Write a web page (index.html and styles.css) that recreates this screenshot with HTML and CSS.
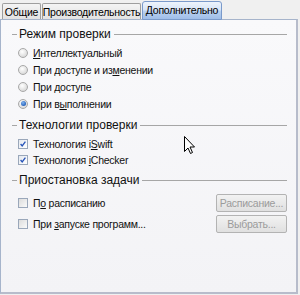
FILE: index.html
```html
<!DOCTYPE html>
<html>
<head>
<meta charset="utf-8">
<link rel="stylesheet" href="styles.css">
</head>
<body>
<div class="window">
  <div class="tabs">
    <div class="tab t1">Общие</div>
    <div class="tab t2">Производительность</div>
    <div class="tab active">Дополнительно</div>
  </div>
  <div class="panel">
    <div class="group">
      <div class="legend"><span class="lead"></span><span class="ltext">Режим проверки</span><span class="rule"></span></div>
      <div class="opts radios">
        <div class="row"><span class="radio"></span><span><u>И</u>нтеллектуальный</span></div>
        <div class="row"><span class="radio"></span><span>При доступе и из<u>м</u>енении</span></div>
        <div class="row"><span class="radio"></span><span>При <u>д</u>оступе</span></div>
        <div class="row"><span class="radio on"></span><span>При в<u>ы</u>полнении</span></div>
      </div>
    </div>
    <div class="group">
      <div class="legend"><span class="lead"></span><span class="ltext">Технологии проверки</span><span class="rule"></span></div>
      <div class="opts checks">
        <div class="row"><span class="check on"><svg viewBox="0 0 10 10" width="10" height="10"><path d="M2 5 L4 7.5 L8 2" fill="none" stroke="#2452b8" stroke-width="1.6"/></svg></span><span>Технология i<u>S</u>wift</span></div>
        <div class="row"><span class="check on"><svg viewBox="0 0 10 10" width="10" height="10"><path d="M2 5 L4 7.5 L8 2" fill="none" stroke="#2452b8" stroke-width="1.6"/></svg></span><span>Технология <u>i</u>Checker</span></div>
      </div>
    </div>
    <div class="group">
      <div class="legend"><span class="lead"></span><span class="ltext">Приостановка задачи</span><span class="rule"></span></div>
      <div class="opts tasks">
        <div class="row"><span class="check"></span><span class="grow">П<u>о</u> расписанию</span><span class="btn">Расписание...</span></div>
        <div class="row"><span class="check"></span><span class="grow">При <u>з</u>апуске программ...</span><span class="btn">Выбрать...</span></div>
      </div>
    </div>
  </div>
  <svg class="cursor" width="12" height="19" viewBox="0 0 12 19"><path d="M0.5 0.5 L0.5 15.5 L4 12 L6.5 17.5 L8.5 16.5 L6 11 L10.5 11 Z" fill="#fff" stroke="#000" stroke-width="1"/></svg>
</div>
</body>
</html>
```

FILE: styles.css
```css
html, body {
  margin: 0;
  padding: 0;
}
body {
  width: 300px;
  height: 295px;
  background: #f0f0f0;
  font-family: "Liberation Sans", "DejaVu Sans", sans-serif;
  font-size: 10.5px;
  letter-spacing: -0.25px;
  color: #000;
  overflow: hidden;
}
.window {
  position: relative;
  width: 300px;
  height: 295px;
}
.tabs {
  display: flex;
  align-items: flex-end;
  height: 19px;
  padding-left: 2px;
  position: relative;
  z-index: 2;
}
.tab {
  box-sizing: border-box;
  height: 16px;
  border: 1px solid #9e9e9e;
  border-bottom: none;
  border-radius: 2px 2px 0 0;
  background: linear-gradient(#f4f4f4, #e2e2e2);
  display: flex;
  align-items: center;
  justify-content: center;
  margin-right: 1px;
}
.t1 { width: 39px; }
.t2 { width: 99px; }
.tab.active {
  width: 80px;
  height: 19px;
  margin-bottom: -1px;
  border: 1px solid #7a9acb;
  border-radius: 3px 3px 0 0;
  background: linear-gradient(#eef4fc 0%, #d7e5f7 45%, #b8d0f0 55%, #9fbde8 100%);
  padding-bottom: 1px;
}
.panel {
  box-sizing: border-box;
  width: 298px;
  height: 275px;
  border: 1px solid #a6b4cb;
  border-right: 2px solid #b7bccb;
  border-bottom: 2px solid #b7bccb;
  background: linear-gradient(#f9f9fb, #f3f3f6);
  padding: 7px 9px 0 11px;
  display: flex;
  flex-direction: column;
}
.legend {
  display: flex;
  align-items: center;
  height: 14px;
}
.lead {
  width: 5px;
  height: 1px;
  background: #a6a6a6;
  margin-right: 2px;
}
.ltext {
  font-size: 12px;
  letter-spacing: 0;
  color: #111;
}
.rule {
  flex: 1;
  height: 1px;
  background: #a6a6a6;
  margin-left: 3px;
}
.opts {
  display: flex;
  flex-direction: column;
  padding-left: 6px;
}
.radios { padding-top: 5px; gap: 4px; margin-bottom: 8px; }
.checks { padding-top: 5px; gap: 3px; margin-bottom: 7px; }
.tasks { padding-top: 6px; gap: 2px; }
.row {
  display: flex;
  align-items: center;
  height: 13px;
  gap: 5px;
  color: #111;
}
.tasks .row { height: 19px; }
.radio {
  box-sizing: border-box;
  width: 10px;
  height: 10px;
  border-radius: 50%;
  border: 1px solid #a8a8a8;
  background: radial-gradient(circle at 40% 35%, #ffffff, #dcdcdc 70%, #c8c8c8);
  display: flex;
  align-items: center;
  justify-content: center;
}
.radio.on::after {
  content: "";
  width: 5px;
  height: 5px;
  border-radius: 50%;
  background: radial-gradient(circle at 40% 35%, #7fb4f0, #1b57b5 80%);
}
.check {
  box-sizing: border-box;
  width: 10px;
  height: 10px;
  border: 1px solid #9aa7ba;
  background: linear-gradient(135deg, #dcdcdc, #fafafa);
  display: flex;
  align-items: center;
  justify-content: center;
}
.check svg { display: block; }
.check.on { background: linear-gradient(135deg, #e4e8ef, #ffffff); }
.grow { flex: 1; }
.btn {
  box-sizing: border-box;
  width: 71px;
  height: 18px;
  border: 1px solid #b3b3b3;
  border-radius: 2px;
  background: linear-gradient(#f2f2f2, #e0e0e0);
  color: #9b9b9b;
  display: flex;
  align-items: center;
  justify-content: center;
}
u { text-decoration-thickness: 1px; text-underline-offset: 1px; }
.cursor {
  position: absolute;
  left: 184px;
  top: 136px;
}
```
